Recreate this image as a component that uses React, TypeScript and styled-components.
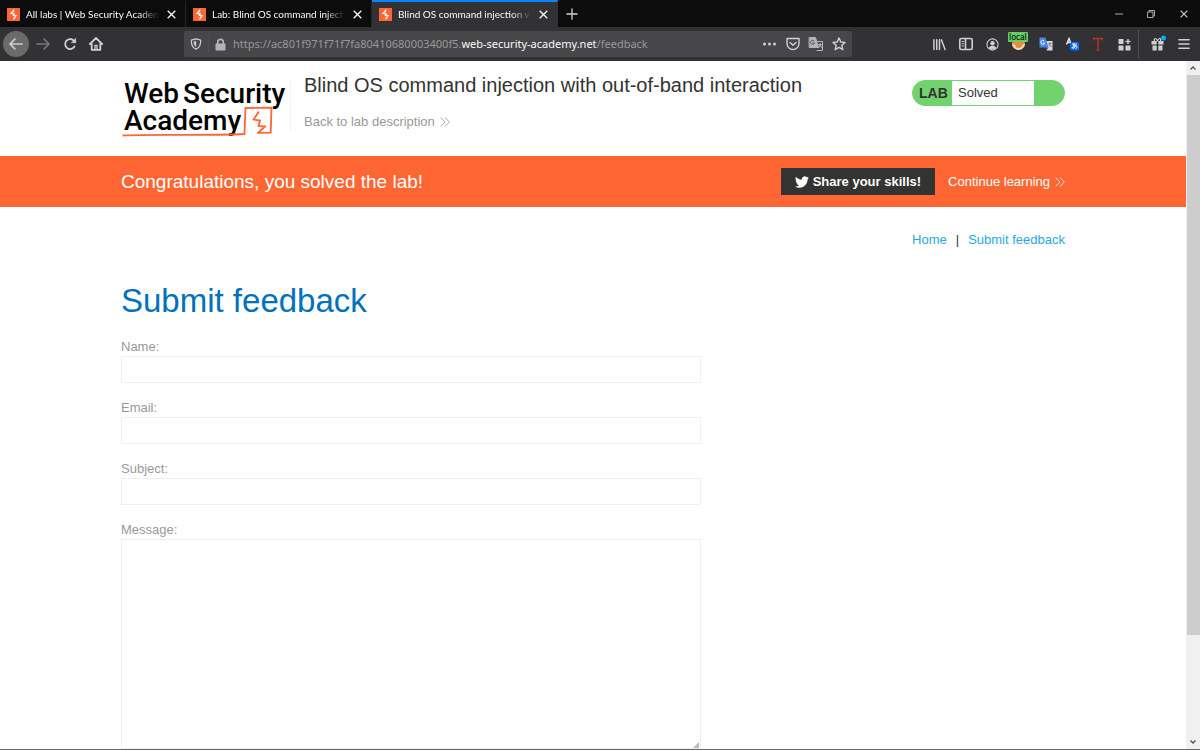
import React from "react";
import styled, { createGlobalStyle } from "styled-components";

const Global = createGlobalStyle`
  * { box-sizing: border-box; }
  body { margin: 0; background: #fff; }
  button, input, textarea { font: inherit; }
  a { text-decoration: none; }
`;

const uiFont = `"Noto Sans", "Open Sans", sans-serif`;
const pageFont = `"Liberation Sans", Arial, sans-serif`;

const Window = styled.div`
  height: 100vh;
  display: flex;
  flex-direction: column;
  overflow: hidden;
  border-bottom: 1px solid #666;
  font-family: ${uiFont};
`;

const TabStrip = styled.header`
  display: flex;
  flex: none;
  height: 27px;
  background: #0c0c0d;
  color: #f9f9fa;
`;

const Tab = styled.div<{ $active?: boolean }>`
  display: flex;
  align-items: center;
  gap: 5px;
  width: 186px;
  padding: 0 7px;
  border-top: 2px solid ${(p) => (p.$active ? "#0a84ff" : "transparent")};
  border-right: 1px solid ${(p) => (p.$active ? "#323234" : "#252526")};
  background: ${(p) => (p.$active ? "#323234" : "transparent")};
`;

const TabTitle = styled.span`
  flex: 1;
  min-width: 0;
  overflow: hidden;
  padding: 0 0 1px 1px;
  white-space: nowrap;
  font-family: Lato, sans-serif;
  font-size: 10px;
  line-height: 16px;
  mask-image: linear-gradient(to left, transparent, #000 20px);
`;

const IconButton = styled.button<{ $w?: number; $color?: string }>`
  display: flex;
  flex: none;
  align-items: center;
  justify-content: center;
  width: ${(p) => p.$w ?? 26}px;
  height: 100%;
  padding: 0;
  border: 0;
  background: none;
  color: ${(p) => p.$color ?? "#d0d0d2"};
  svg { display: block; overflow: visible; }
`;

const WindowControls = styled.div`
  display: flex;
  margin-left: auto;
`;

const Toolbar = styled.nav`
  display: flex;
  flex: none;
  align-items: center;
  height: 34px;
  padding: 0 7px 0 3px;
  background: #323234;
`;

const BackButton = styled(IconButton)`
  height: 26px;
  border-radius: 50%;
  background: #6b6b6c;
`;

const AddressBar = styled.div`
  display: flex;
  flex: 1;
  align-items: center;
  min-width: 0;
  height: 26px;
  margin: 0 75px;
  padding: 0 2px 0 0;
  border-radius: 2px;
  background: #474749;
`;

const Address = styled.div`
  flex: 1;
  min-width: 0;
  overflow: hidden;
  padding-left: 1px;
  white-space: nowrap;
  font-size: 11px;
  line-height: 18px;
  color: #98989a;
  strong { font-weight: 400; color: #f9f9fa; }
`;

const Divider = styled.span<{ $h: number }>`
  flex: none;
  width: 1px;
  height: ${(p) => p.$h}px;
  background: #4e4e50;
`;

const Extension = styled.span`
  position: relative;
  display: flex;
`;

const Badge = styled.span`
  position: absolute;
  top: -5px;
  left: -4px;
  padding: 0 1px;
  border-radius: 1px;
  background: #6c6;
  color: #0c0c0d;
  font-size: 8px;
  font-weight: 500;
  line-height: 10px;
`;

const Viewport = styled.div`
  display: flex;
  flex: 1;
  min-height: 0;
`;

const Page = styled.div`
  flex: 1;
  min-width: 0;
  overflow: hidden;
  background: #fff;
  font-family: ${pageFont};
  font-size: 13px;
  line-height: 16px;
  color: #333332;
`;

const Scrollbar = styled.div`
  display: flex;
  flex: none;
  flex-direction: column;
  width: 14px;
  background: #f0f0f0;
`;

const ScrollThumb = styled.div`
  height: 560px;
  margin: 0 0 auto 1px;
  background: #cdcdcd;
`;

const ScrollButton = styled(IconButton)`
  width: 14px;
  height: 14px;
`;

const Container = styled.div`
  max-width: 944px;
  margin: 0 auto;
`;

const LabHeader = styled(Container)`
  display: flex;
  align-items: flex-start;
  height: 95px;
  padding-top: 14px;
`;

const LogoLink = styled.a`
  height: 64px;
  svg { display: block; overflow: visible; }
`;

const TitleBlock = styled.div`
  flex: 1;
  margin: 5px 0 0 4px;
  padding-left: 13px;
  height: 51px;
  border-left: 1px solid #f2f2f2;
`;

const LabTitle = styled.h2`
  margin: -7px 0 17px;
  font-size: 20px;
  line-height: 24px;
  font-weight: 400;
`;

const ArrowLink = styled.a<{ $color: string }>`
  display: flex;
  align-items: center;
  gap: 5px;
  color: ${(p) => p.$color};
`;

const Status = styled.div`
  display: flex;
  width: 153px;
  height: 26px;
  margin-top: 5px;
  overflow: hidden;
  border: 1px solid #72d26e;
  border-radius: 13px;
  background: #72d26e;
  line-height: 24px;
  strong { width: 39px; padding-left: 6px; font-size: 14px; }
  span { width: 82px; padding-left: 6px; background: #fff; }
`;

const Banner = styled.section`
  background: #ff6633;
  color: #fff;
`;

const BannerRow = styled(Container)`
  display: flex;
  align-items: center;
  height: 51px;
`;

const BannerText = styled.h4`
  flex: 1;
  margin: 0;
  font-size: 19px;
  line-height: 24px;
  font-weight: 400;
`;

const ShareButton = styled.button`
  display: flex;
  align-items: center;
  gap: 4px;
  height: 27px;
  margin-right: 13px;
  padding: 0 14px;
  border: 0;
  background: #333332;
  color: #fff;
  font-weight: 700;
`;

const SiteNav = styled.nav`
  display: flex;
  justify-content: flex-end;
  gap: 9px;
  padding-top: 25px;
  a { color: #29a9e1; }
`;

const Heading = styled.h1`
  margin: 33px 0 18px;
  font-size: 33px;
  line-height: 40px;
  font-weight: 400;
  color: #0071bc;
`;

const Form = styled.form`
  max-width: 580px;
`;

const Field = styled.div`
  position: relative;
  margin-bottom: 17px;
  label { display: block; margin-bottom: 1px; color: #999; }
  input, textarea {
    display: block;
    width: 100%;
    padding: 4px;
    border: 1px solid #f0f0f0;
    border-radius: 0;
    background: #fff;
  }
  input { height: 27px; }
  textarea { height: 210px; resize: none; }
`;

const Grip = styled.svg`
  position: absolute;
  right: 2px;
  bottom: 1px;
`;

const Burp = () => (
  <svg width="13" height="13" viewBox="0 0 13 13">
    <rect width="13" height="13" fill="#ff6633" />
    <path d="M7.200.800 2.800 6h2.900v2.400L7 7.600V5.800L5.300 5 7.200 3.400zM6.500 12.200l3.800-5.200H7.600V4.800L6.200 5.600v1.800l1.700.9-1.400 1.600z" fill="#fff" />
  </svg>
);

const Close = ({ size = 9 }: { size?: number }) => (
  <svg width={size} height={size} viewBox="0 0 9 9" fill="none" stroke="currentColor" strokeWidth="1.3">
    <path d="M.7.7l7.6 7.6M8.3.7.7 8.3" />
  </svg>
);

type StrokeProps = { children: React.ReactNode; size?: number; w?: number };
const Stroke = ({ children, size = 14, w = 1.4 }: StrokeProps) => (
  <svg width={size} height={size} viewBox="0 0 14 14" fill="none" stroke="currentColor" strokeWidth={w} strokeLinecap="round" strokeLinejoin="round">
    {children}
  </svg>
);

const Chevrons = () => (
  <svg width="10" height="10" viewBox="0 0 10 10" fill="none" stroke="currentColor" strokeWidth="0.8">
    <path d="M.7.5 5 5 .7 9.5M5 .5 9.3 5 5 9.5" />
  </svg>
);

const Logo = () => (
  <svg width="165" height="64" viewBox="0 0 165 64" role="img" aria-label="Web Security Academy">
    <g fill="#000" fontFamily="Roboto, sans-serif" fontSize="28" fontWeight="500">
      <text x="3" y="28">Web</text>
      <text x="62" y="28">Security</text>
      <text x="3" y="55">Academy</text>
    </g>
    <path d="M1.500 60.500c30-1.500 80 .300 122-1.500l1-26 26-.4-.8 25-13.500.2" fill="none" stroke="#ff6633" strokeWidth="1.800" />
    <path d="M138 36.500l-5.500 8 6.500 1-1.500 5.500 6.500.500-7 6.500" fill="none" stroke="#ff6633" strokeWidth="1.800" />
  </svg>
);

const tabs = [
  { title: "All labs | Web Security Academy" },
  { title: "Lab: Blind OS command injection with out-of-band" },
  { title: "Blind OS command injection with out-of-band", active: true },
];

const fields = ["Name", "Email", "Subject"];

export default function App() {
  return (
    <Window>
      <Global />
      <TabStrip>
        {tabs.map((t) => (
          <Tab key={t.title} $active={t.active}>
            <Burp />
            <TabTitle>{t.title}</TabTitle>
            <IconButton $w={14} $color="#f9f9fa" aria-label="Close tab"><Close /></IconButton>
          </Tab>
        ))}
        <IconButton $w={28} aria-label="New tab">
          <Stroke size={12} w={1.5}><path d="M7 1v12M1 7h12" /></Stroke>
        </IconButton>
        <WindowControls>
          <IconButton $w={32} aria-label="Minimize">
            <svg width="8" height="8" viewBox="0 0 8 8"><path d="M0 4h8" stroke="#aaa" /></svg>
          </IconButton>
          <IconButton $w={32} aria-label="Restore">
            <svg width="8" height="8" viewBox="0 0 8 8" fill="none" stroke="#ccc" strokeWidth=".8"><path d="M.5 2h5.500v5.500H.5zM2 2V.5h5.500V6H6" /></svg>
          </IconButton>
          <IconButton $w={33} aria-label="Close window"><Close size={8} /></IconButton>
        </WindowControls>
      </TabStrip>

      <Toolbar>
        <BackButton aria-label="Back"><Stroke w={1.7}><path d="M13 7H1M6 2 1 7l5 5" /></Stroke></BackButton>
        <IconButton $w={28} $color="#77777a" aria-label="Forward"><Stroke w={1.7}><path d="M1 7h12M8 2l5 5-5 5" /></Stroke></IconButton>
        <IconButton aria-label="Reload">
          <Stroke w={1.8}><path d="M11.500 9.500A5 5 0 1 1 10.600 3.400L12 4.800" /><path d="M12.800 1.300v4.500H8.300z" fill="currentColor" strokeWidth=".4" /></Stroke>
        </IconButton>
        <IconButton aria-label="Home">
          <Stroke w={1.8}><path d="M.8 7.200 7 1l6.200 6.200M2.700 6.500v6.300h8.600V6.500" /><path d="M6 12.500V8.500h2v4" strokeWidth="1.300" /></Stroke>
        </IconButton>
        <AddressBar>
          <IconButton $w={24} aria-label="Tracking protection">
            <Stroke size={12}><path d="M7 1 12.500 2.500C12.500 8 11 11.500 7 13 3 11.500 1.500 8 1.500 2.500z" /><path d="M7 4v6C5 9 4.500 7 4.500 4.500z" fill="currentColor" strokeWidth=".5" /></Stroke>
          </IconButton>
          <Divider $h={18} />
          <IconButton $w={23} $color="#b4b4b6" aria-label="Connection">
            <Stroke size={13} w={1.8}><path d="M4 7V4.500a3 3 0 0 1 6 0V7" /><rect x="2.500" y="6.800" width="9" height="5.700" fill="currentColor" /></Stroke>
          </IconButton>
          <Address>
            https://ac801f971f71f7fa80410680003400f5.<strong>web-security-academy.net</strong>/feedback
          </Address>
          <IconButton $w={24} aria-label="Page actions">
            <svg width="13" height="4" viewBox="0 0 13 4" fill="currentColor"><circle cx="1.500" cy="2" r="1.500" /><circle cx="6.500" cy="2" r="1.500" /><circle cx="11.500" cy="2" r="1.500" /></svg>
          </IconButton>
          <IconButton $w={23} aria-label="Pocket">
            <Stroke><path d="M1 1.500h12v5a6 6 0 0 1-12 0zM4 5.500l3 2.800 3-2.800" /></Stroke>
          </IconButton>
          <IconButton $w={23} $color="#b4b4b6" aria-label="Translate page">
            <Stroke w={1}><path d="M7 4.500h6.500v9H8" /><path d="M.5.500h6l3 10h-9z" fill="currentColor" /><path d="M5.200 4A2 2 0 1 0 5.500 6H4" stroke="#5a5a5c" /><path d="M9.500 7.500h3M11 6.500v1l-1 3M11 7.500l1.500 3" /></Stroke>
          </IconButton>
          <IconButton $w={23} aria-label="Bookmark">
            <Stroke><path d="M7 1l1.800 4 4.200.4-3.200 2.900 1 4.400L7 10.400l-3.800 2.300 1-4.400L1 5.400 5.200 5z" /></Stroke>
          </IconButton>
        </AddressBar>
        <IconButton $w={25} aria-label="Library">
          <Stroke size={13} w={1.6}><path d="M1 2v10.500M4 2v10.500M7 2v10.500M9 2l4 10.500" /></Stroke>
        </IconButton>
        <IconButton $w={27} aria-label="Sidebar">
          <Stroke w={1.6}><rect x=".8" y="1.500" width="12.400" height="11" rx="1.500" /><path d="M6.500 2v10" /><path d="M3 4.500h1.500M3 6.800h1.500M3 9h1.500" strokeWidth="1" /></Stroke>
        </IconButton>
        <IconButton $w={27} aria-label="Account">
          <Stroke w={1.2} size={13}><circle cx="7" cy="7" r="6" /><circle cx="7" cy="5.600" r="1.800" fill="currentColor" /><path d="M3.800 10.500c.8-2 5.600-2 6.400 0-1.500 1.500-5 1.500-6.400 0z" fill="currentColor" /></Stroke>
        </IconButton>
        <IconButton aria-label="FoxyProxy, local">
          <Extension>
            <svg width="14" height="14" viewBox="0 0 14 14">
              <circle cx="6.500" cy="6.500" r="6.500" fill="#f08c2e" />
              <path d="M0 6.500C2 8 3 7 4.500 9l2 1.500L8.500 9C10 7 11 8 13 6.500a6.500 6.500 0 0 1-13 0z" fill="#e8dccf" />
              <path d="M3 9c1 2.500 5.500 3 7.500-.500L8 7z" fill="#e98a35" />
            </svg>
            <Badge>local</Badge>
          </Extension>
        </IconButton>
        <IconButton $w={27} aria-label="Google Translate">
          <svg width="14" height="14" viewBox="0 0 14 14" fill="none">
            <path d="M6 4h7.500v9.500H8z" fill="#d8d8d8" />
            <path d="M.5.500h6l3 10h-9z" fill="#4a86e8" />
            <path d="M5.300 4A2 2 0 1 0 5.700 6H4" stroke="#fff" strokeWidth=".9" />
            <path d="M9.500 6.500h3M11 5.500v1l-1 2.500M10.500 7.500l2 2.500" stroke="#667" strokeWidth=".8" />
            <path d="M6.500 10.500h3l-2 2.800z" fill="#2a56c6" />
          </svg>
        </IconButton>
        <IconButton aria-label="Translate selection">
          <svg width="14" height="14" viewBox="0 0 14 14" fill="none">
            <path d="M1.500 7.500 4 1.500l2.500 6M2.300 5.500h3.400" stroke="#eee" strokeWidth="1.400" />
            <rect x="5" y="5" width="9" height="8.500" rx="1.500" fill="#0a6cff" />
            <path d="M7 7.200h4.800M9 6v5.300M11 8c-.8 2.500-2.500 3.800-3.500 3.200-1-1 1-2.700 3-2.500s2 2.500 0 3" stroke="#fff" strokeWidth=".9" />
          </svg>
        </IconButton>
        <IconButton $color="#b8321f" aria-label="Text tool">
          <svg width="10" height="14" viewBox="0 0 10 14" fill="none"><path d="M.7 3.500V1.500h8.600v2M5 1.500V13M3.500 13h3" stroke="currentColor" strokeWidth="1.400" /></svg>
        </IconButton>
        <IconButton $w={27} aria-label="Extensions">
          <svg width="13" height="13" viewBox="0 0 13 13" fill="currentColor">
            <rect x=".5" y="1" width="5" height="5" rx=".6" /><rect x=".5" y="7.500" width="5" height="5" rx=".6" /><rect x="7.500" y="7.500" width="5" height="5" rx=".6" />
            <path d="M9.300 1h1.400v1.800h1.800v1.400h-1.800V6H9.300V4.200H7.500V2.800h1.800z" />
          </svg>
        </IconButton>
        <Divider $h={28} />
        <IconButton $w={36} aria-label="What's new">
          <Extension>
            <svg width="13" height="14" viewBox="0 0 13 14" fill="currentColor">
              <path d="M.5 4h5.200v3.500H.5zM7.300 4h5.200v3.500H7.300zM1.500 8.500h4.200v5H1.500zM7.300 8.500h4.200v5H7.300z" />
              <path d="M6.500 4C5 0 2.500 1.500 3.500 4M6.500 4C8 0 10.500 1.500 9.500 4" fill="none" stroke="currentColor" strokeWidth="1.200" />
              <circle cx="12.500" cy="1" r="2.500" fill="#00aeff" />
            </svg>
          </Extension>
        </IconButton>
        <IconButton $w={18} aria-label="Menu">
          <Stroke size={12} w={1.6}><path d="M1 2h12M1 7h12M1 12h12" /></Stroke>
        </IconButton>
      </Toolbar>

      <Viewport>
        <Page>
          <LabHeader>
            <LogoLink href="#"><Logo /></LogoLink>
            <TitleBlock>
              <LabTitle>Blind OS command injection with out-of-band interaction</LabTitle>
              <ArrowLink href="#" $color="#999">Back to lab description <Chevrons /></ArrowLink>
            </TitleBlock>
            <Status><strong>LAB</strong><span>Solved</span></Status>
          </LabHeader>
          <Banner>
            <BannerRow>
              <BannerText>Congratulations, you solved the lab!</BannerText>
              <ShareButton>
                <svg width="14" height="14" viewBox="0 0 24 24" fill="currentColor">
                  <path d="M23.950 4.570a10 10 0 0 1-2.820.770 4.960 4.960 0 0 0 2.160-2.720c-.950.550-2 .960-3.130 1.190a4.920 4.920 0 0 0-8.380 4.480C7.690 8.090 4.070 6.130 1.640 3.160a4.930 4.930 0 0 0 1.520 6.570 4.900 4.900 0 0 1-2.230-.610v.060a4.920 4.920 0 0 0 3.950 4.830 5 5 0 0 1-2.210.080 4.940 4.940 0 0 0 4.600 3.420A9.870 9.870 0 0 1 0 19.540a14 14 0 0 0 7.550 2.210c9.050 0 14-7.500 14-13.980l-.020-.640a9.900 9.900 0 0 0 2.420-2.560z" />
                </svg>
                Share your skills!
              </ShareButton>
              <ArrowLink href="#" $color="#fff">Continue learning <Chevrons /></ArrowLink>
            </BannerRow>
          </Banner>
          <Container>
            <SiteNav><a href="#">Home</a><span>|</span><a href="#">Submit feedback</a></SiteNav>
            <Heading>Submit feedback</Heading>
            <Form>
              {fields.map((f) => (
                <Field key={f}>
                  <label htmlFor={f}>{f}:</label>
                  <input id={f} type="text" />
                </Field>
              ))}
              <Field>
                <label htmlFor="Message">Message:</label>
                <textarea id="Message" />
                <Grip width="6" height="6" viewBox="0 0 6 6"><path d="M6 0v6H0z" fill="#bbb" /></Grip>
              </Field>
            </Form>
          </Container>
        </Page>
        <Scrollbar>
          <ScrollButton $w={14} $color="#505050" aria-label="Scroll up">
            <svg width="6" height="4" viewBox="0 0 6 4" fill="none" stroke="currentColor" strokeWidth="1.300"><path d="M.5 3.500 3 1l2.500 2.500" /></svg>
          </ScrollButton>
          <ScrollThumb />
          <ScrollButton $w={14} $color="#505050" aria-label="Scroll down">
            <svg width="6" height="4" viewBox="0 0 6 4" fill="none" stroke="currentColor" strokeWidth="1.300"><path d="M.5.500 3 3 5.500.500" /></svg>
          </ScrollButton>
        </Scrollbar>
      </Viewport>
    </Window>
  );
}
